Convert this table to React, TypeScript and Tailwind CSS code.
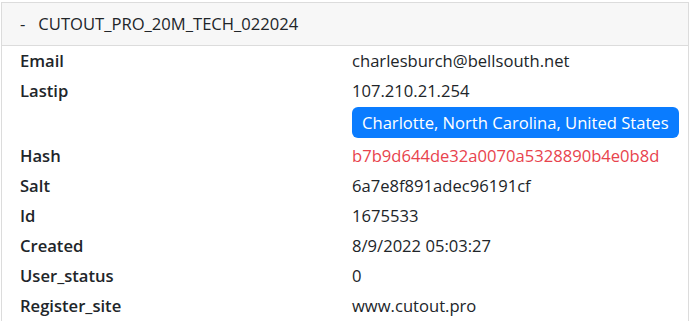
const rows: { label: string; value: string; tone?: "hash" }[] = [
  { label: "Email", value: "charlesburch@bellsouth.net" },
  { label: "Lastip", value: "107.210.21.254" },
];

const rest: { label: string; value: string; tone?: "hash" }[] = [
  { label: "Hash", value: "b7b9d644de32a0070a5328890b4e0b8d", tone: "hash" },
  { label: "Salt", value: "6a7e8f891adec96191cf" },
  { label: "Id", value: "1675533" },
  { label: "Created", value: "8/9/2022 05:03:27" },
  { label: "User_status", value: "0" },
  { label: "Register_site", value: "www.cutout.pro" },
];

function Row({ label, value, tone }: { label: string; value: string; tone?: "hash" }) {
  return (
    <div className="grid h-[30px] grid-cols-[350px_1fr] items-center">
      <div className="pl-[18px] font-semibold text-[#212529]">{label}</div>
      <div className={tone === "hash" ? "text-[#e8434d]" : "text-[#212529]"}>{value}</div>
    </div>
  );
}

export default function App() {
  return (
    <main
      className="min-h-screen bg-white pt-[2px] pl-[1px] text-[16.6px] leading-[24px]"
      style={{ fontFamily: '"Open Sans", "Noto Sans", sans-serif' }}
    >
      <div className="border-l border-t border-r border-[#dcdcdc]">
        {/* Header */}
        <div className="flex h-[43px] items-center gap-[13px] border-b border-[#dcdcdc] bg-[#f7f7f7] pl-[18px] text-[#212529]">
          <span>-</span>
          <span>CUTOUT_PRO_20M_TECH_022024</span>
        </div>

        {rows.map((r) => (
          <Row key={r.label} {...r} />
        ))}

        {/* Location badge */}
        <div className="grid grid-cols-[350px_1fr] pt-[1px] pb-[3px]">
          <div />
          <div>
            <span className="inline-flex h-[31px] items-center rounded-[6px] bg-[#0a7cff] px-[10px] text-white">
              Charlotte, North Carolina, United States
            </span>
          </div>
        </div>

        {rest.map((r) => (
          <Row key={r.label} {...r} />
        ))}
      </div>
    </main>
  );
}
